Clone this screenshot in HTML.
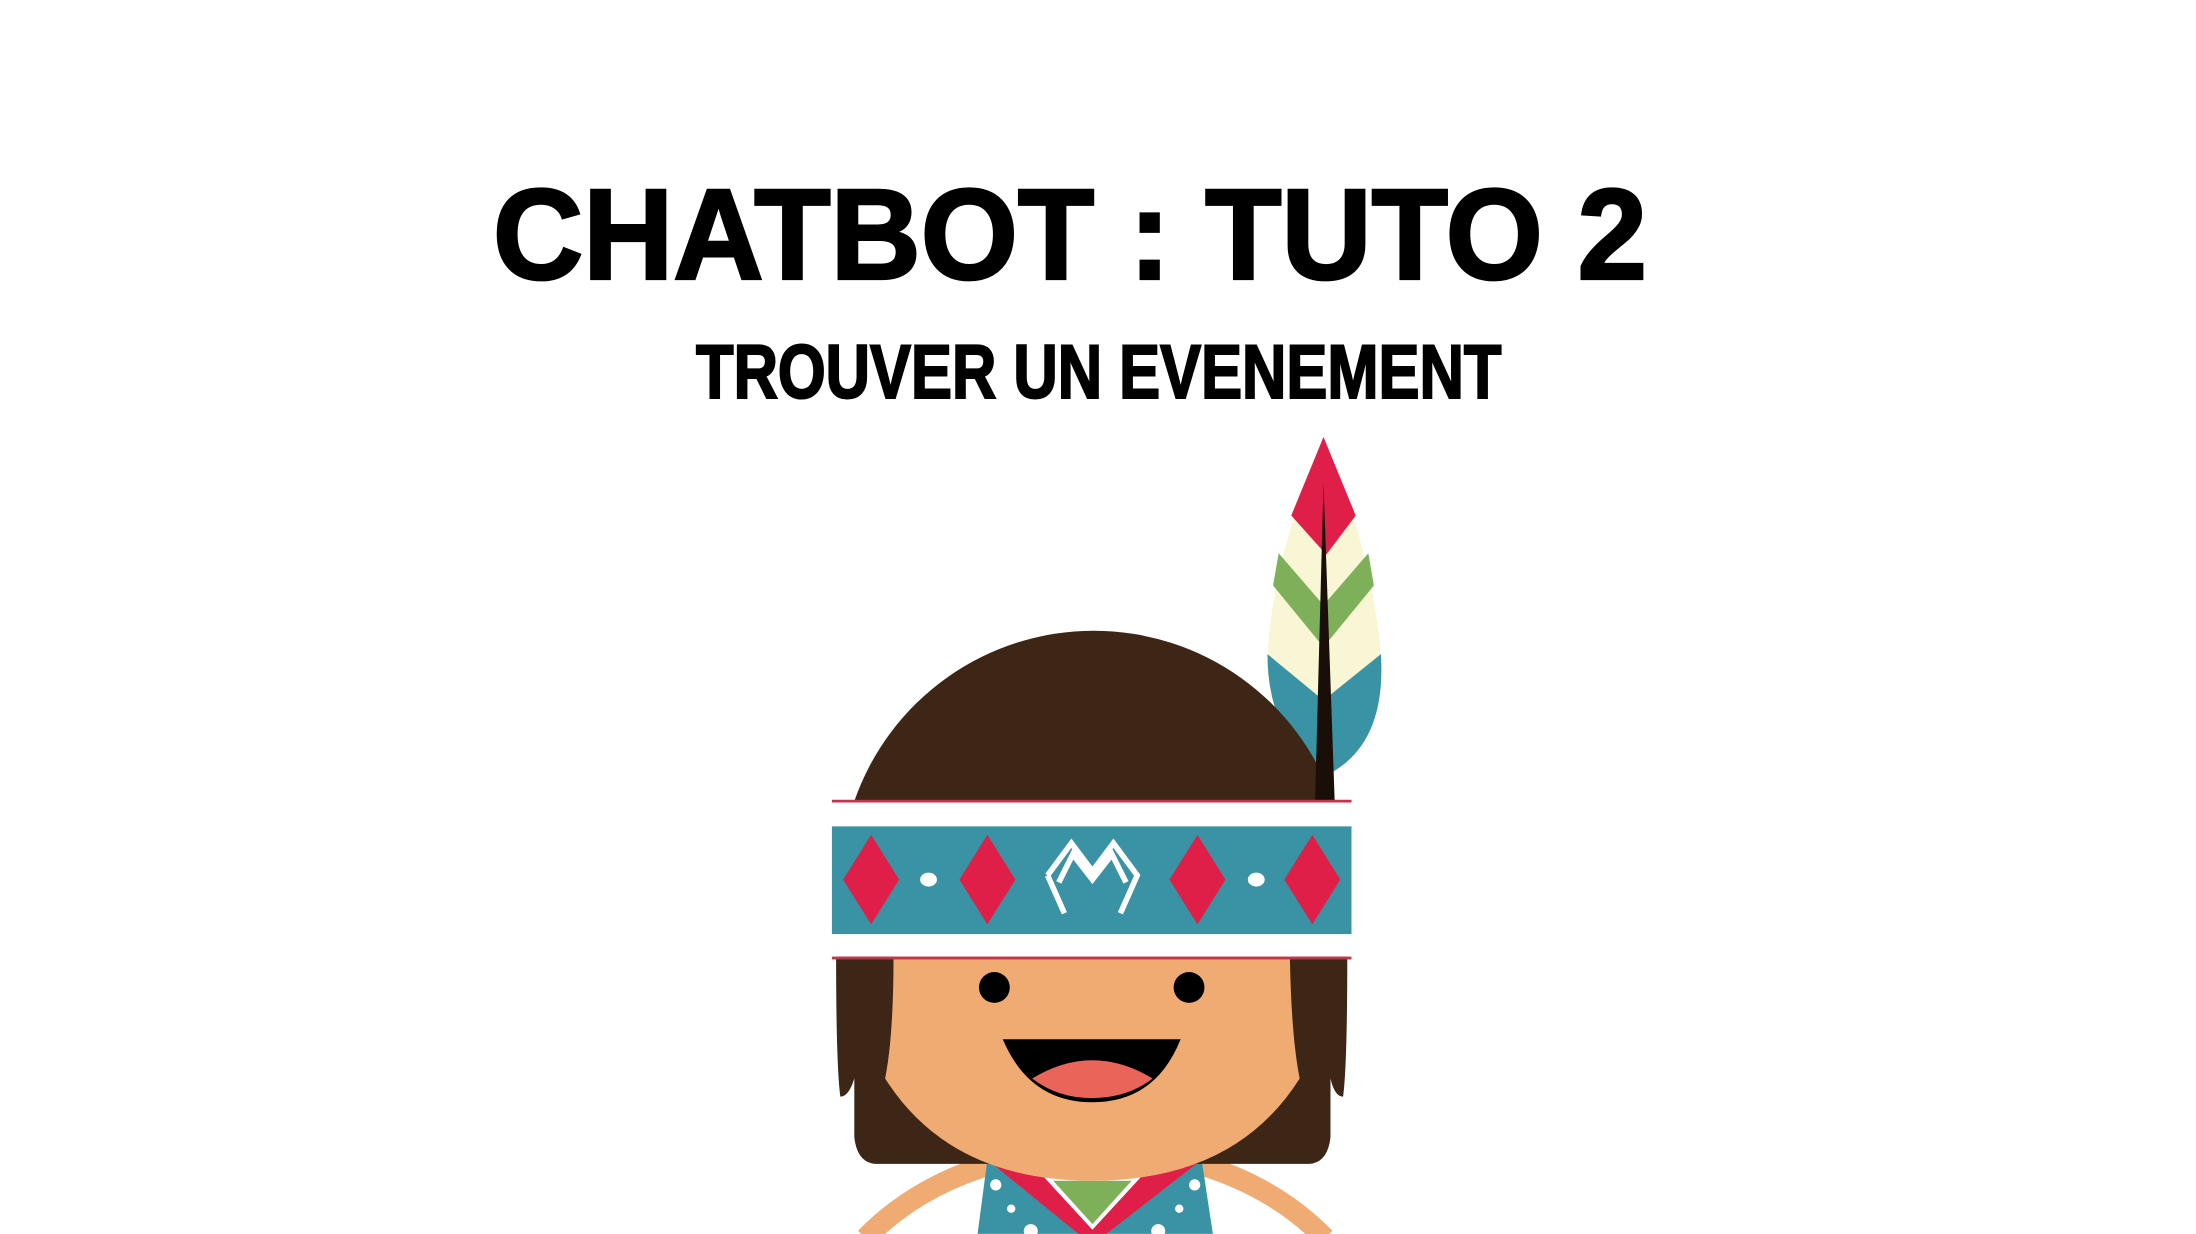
<!DOCTYPE html>
<html><head><meta charset="utf-8"><style>
html,body{margin:0;padding:0;background:#fff;width:2196px;height:1234px;overflow:hidden}
svg{display:block}
</style></head><body>
<svg width="2196" height="1234" viewBox="0 0 1568 881" xmlns="http://www.w3.org/2000/svg">
<rect width="1568" height="881" fill="#fff"/>
<text x="352" y="199" font-family="Liberation Sans, sans-serif" font-weight="bold" font-size="92" textLength="824" lengthAdjust="spacingAndGlyphs" fill="#000" stroke="#000" stroke-width="2">CHATBOT : TUTO 2</text>
<text x="497" y="284" font-family="Liberation Sans Narrow, Liberation Sans, sans-serif" font-weight="bold" font-size="54" textLength="575" lengthAdjust="spacingAndGlyphs" fill="#000" stroke="#000" stroke-width="1.5">TROUVER UN EVENEMENT</text>

<!-- arms -->
<path d="M618 884 Q655 846 712 830" stroke="#f0ab72" stroke-width="15" fill="none"/>
<path d="M946 884 Q909 846 852 830" stroke="#f0ab72" stroke-width="15" fill="none"/>
<!-- shirt -->
<path d="M705 828 L858 828 L866 881 L698 881 Z" fill="#3a93a4"/>
<path d="M705 828 L732 828 L780 872 L828 828 L858 828 L790 881 L770 881 Z" fill="#e01f48"/>
<path d="M745 840 L815 840 L780 878 Z" fill="#fff"/>
<path d="M752 843 L808 843 L780 874 Z" fill="#7eb05a"/>
<g fill="#fff"><circle cx="711" cy="846" r="4"/><circle cx="722" cy="863" r="3"/><circle cx="736" cy="879" r="5"/><circle cx="853" cy="846" r="4"/><circle cx="842" cy="863" r="3"/><circle cx="827" cy="879" r="5"/></g>
<!-- hair back -->
<path d="M597 683 L962 683 Q962 760 959 783 Q953 783 950 770 L950 812 Q948 830 935 831 L625 831 Q612 830 610 812 L610 770 Q606 783 600 783 Q597 760 597 683 Z" fill="#3e2616"/>
<!-- face -->
<path d="M638 683 L921 683 Q922 740 928 770 Q882 843 780 843 Q678 843 632 770 Q638 740 638 683 Z" fill="#f0ab72"/>
<circle cx="710" cy="705" r="11" fill="#000"/>
<circle cx="849" cy="705" r="11" fill="#000"/>
<path d="M716 742 L843 742 Q825 787 780 787 Q735 787 716 742 Z" fill="#000"/>
<path d="M737 770 Q780 744 823 770 Q805 784 780 784 Q755 784 737 770 Z" fill="#e9655a"/>
<!-- feather -->
<path d="M945 312 Q975 380 985 455 Q990 530 950 552 L940 552 Q905 520 905 470 Q908 400 945 312 Z" fill="#f9f6d6"/>
<path d="M945 312 L968 368 L947 396 L922 368 Z" fill="#e01f48"/>
<path d="M913 395 L945 432 L977 395 L981 418 L945 462 L909 418 Z" fill="#7eb05a"/>
<path d="M905 467 L945 500 L986 467 Q990 530 950 552 L940 552 Q905 520 905 467 Z" fill="#3a93a4"/>
<!-- hair dome -->
<path d="M610 572 A181 181 0 0 1 952 572 Z" fill="#3e2616"/>
<path d="M939 572 L945 345 L953 572 Z" fill="#1a0e08"/>
<!-- headband -->
<rect x="594" y="571" width="371" height="2" fill="#c8324c"/>
<rect x="594" y="573" width="371" height="17" fill="#fff"/>
<rect x="594" y="590" width="371" height="77" fill="#3a93a4"/>
<rect x="594" y="667" width="371" height="16" fill="#fff"/>
<rect x="594" y="683" width="371" height="2" fill="#c8324c"/>
<g fill="#e01f48">
<path d="M622 596 L642 628 L622 660 L602 628Z"/>
<path d="M705 596 L725 628 L705 660 L685 628Z"/>
<path d="M855 596 L875 628 L855 660 L835 628Z"/>
<path d="M937 596 L957 628 L937 660 L917 628Z"/>
</g>
<ellipse cx="663" cy="628" rx="6" ry="5" fill="#fff"/>
<ellipse cx="897" cy="628" rx="6" ry="5" fill="#fff"/>
<path d="M748 625 L765 602 L780 622 L795 602 L812 625 L800 652 M760 652 L748 625 M756 630 L766 610 L780 628 L794 610 L804 630" stroke="#fff" stroke-width="4" fill="none" stroke-linejoin="miter"/>
</svg>
</body></html>
